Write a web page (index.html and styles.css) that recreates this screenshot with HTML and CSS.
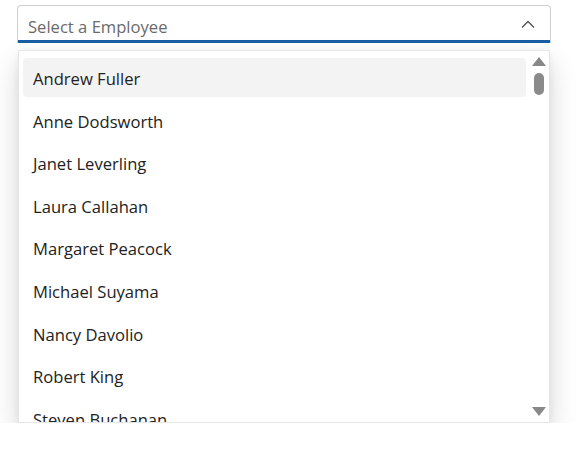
FILE: index.html
```html
<!doctype html>
<html lang="en">
<head>
  <title>Employee dropdown</title>
  <meta charset="utf-8">
  <link rel="stylesheet" href="styles.css">
</head>
<body>
  <div class="dropdown">
    <div class="input">
      <span class="placeholder">Select a Employee</span>
      <svg class="chevron" width="14" height="8" viewBox="0 0 14 8">
        <path d="M1 7.5 L7 1.5 L13 7.5" fill="none" stroke="#505050" stroke-width="1.3"/>
      </svg>
    </div>
    <div class="popup">
      <ul class="list">
        <li class="item active">Andrew Fuller</li>
        <li class="item">Anne Dodsworth</li>
        <li class="item">Janet Leverling</li>
        <li class="item">Laura Callahan</li>
        <li class="item">Margaret Peacock</li>
        <li class="item">Michael Suyama</li>
        <li class="item">Nancy Davolio</li>
        <li class="item">Robert King</li>
        <li class="item">Steven Buchanan</li>
      </ul>
      <div class="scrollbar">
        <span class="arrow up"></span>
        <span class="thumb"></span>
        <span class="track"></span>
        <span class="arrow down"></span>
      </div>
    </div>
  </div>
</body>
</html>
```

FILE: styles.css
```css
body {
  margin: 0;
  background: #ffffff;
  font-family: "Open Sans", "Noto Sans", sans-serif;
}
.dropdown {
  width: 534px;
  padding: 5px 0 0 17px;
}
.input {
  display: flex;
  align-items: center;
  justify-content: space-between;
  padding: 6px 15px 0 10px;
  box-sizing: border-box;
  height: 38px;
  border: 1px solid #cfcfcf;
  border-bottom: 3px solid #1a5fa5;
  border-radius: 4px 4px 2px 2px;
}
.placeholder {
  font-size: 16.6px;
  color: #6a6a6a;
}
.chevron {
  margin-top: -4px;
}
.popup {
  margin: 7px 1px 0 1px;
  height: 371px;
  display: flex;
  background: #ffffff;
  border: 1px solid #e6e6e6;
  border-radius: 2px;
  box-shadow: 0 12px 28px rgba(0, 0, 0, 0.16), 0 2px 6px rgba(0, 0, 0, 0.06);
  overflow: hidden;
}
.list {
  flex: 1;
  list-style: none;
  margin: 0;
  padding: 7px 3px 0 4px;
  display: flex;
  flex-direction: column;
  gap: 4px;
  overflow: hidden;
}
.item {
  flex: none;
  box-sizing: border-box;
  height: 38.6px;
  line-height: 38px;
  padding: 2px 0 0 10px;
  font-size: 16.6px;
  color: #222222;
  border-radius: 4px;
}
.item.active {
  background: #f3f3f3;
}
.scrollbar {
  width: 20px;
  display: flex;
  flex-direction: column;
  align-items: center;
  padding: 6px 0 6px 0;
}
.arrow {
  width: 0;
  height: 0;
  border-left: 7px solid transparent;
  border-right: 7px solid transparent;
}
.arrow.up {
  border-bottom: 9px solid #888888;
}
.arrow.down {
  border-top: 9px solid #888888;
}
.thumb {
  margin-top: 7px;
  width: 10px;
  height: 22px;
  border-radius: 5px;
  background: #8a8a8a;
}
.track {
  flex: 1;
}
```
